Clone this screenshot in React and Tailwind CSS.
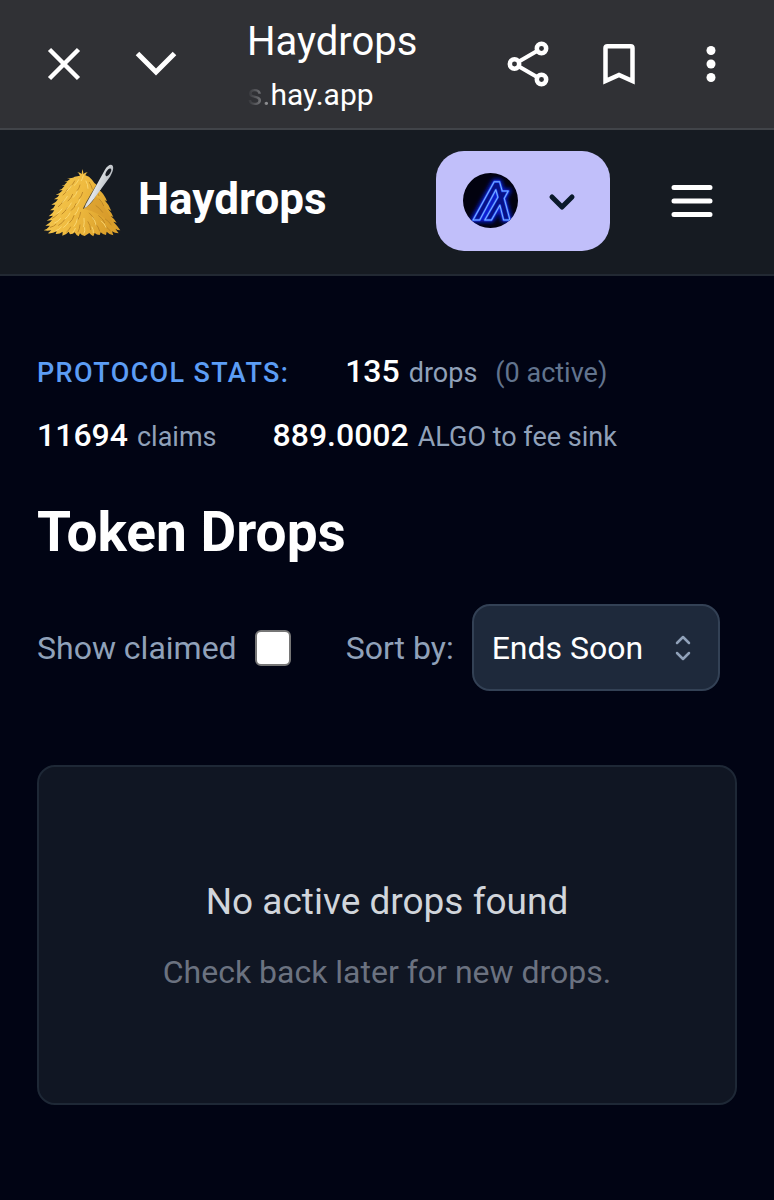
import { useState } from "react";

function HaystackLogo() {
  return (
    <svg
      className="w-[78px] h-[74px] shrink-0"
      viewBox="39 41 234 222"
      aria-hidden="true"
    >
      <defs>
        <linearGradient id="hay" x1="0" y1="0" x2="1" y2="0.3">
          <stop offset="0" stopColor="#f5c951" />
          <stop offset="0.55" stopColor="#efbb40" />
          <stop offset="1" stopColor="#dba02b" />
        </linearGradient>
        <linearGradient id="needle" x1="0" y1="0" x2="1" y2="0.5">
          <stop offset="0" stopColor="#9ba1a7" />
          <stop offset="0.5" stopColor="#e3e6e9" />
          <stop offset="1" stopColor="#a5abb1" />
        </linearGradient>
      </defs>
      <path
        fill="url(#hay)"
        d="M150 76 Q147 69 142 66 Q151 67 155 71 L157 56 Q160 64 160 71 Q165 66 173 66 Q167 70 166 75
        Q178 78 186 88 L193 98 Q206 106 213 118 L206 118 Q222 128 231 153 L224 150
        Q238 164 244 182 L234 176 Q246 188 250 200 L242 197 Q256 208 260 217 L250 214
        Q264 228 271 240 Q262 240 256 235 L266 249 Q254 249 246 243 L250 255 Q238 253 230 244
        L228 254 Q218 252 212 246 L209 254 Q200 254 194 248 L190 258 Q182 254 178 248
        L164 257 Q154 256 150 249 L146 258 Q138 254 134 246 Q130 252 120 252 L116 244
        Q108 254 97 256 L98 244 Q88 252 77 251 L80 243 Q68 250 54 249 L64 240 Q52 242 41 240
        Q52 236 60 226 L46 226 Q60 218 66 210 L50 211 Q64 204 69 196 L56 198 Q68 190 73 180
        L60 180 Q72 174 76 163 L64 163 Q78 158 84 147 L72 147 Q84 142 88 133 L77 134
        Q90 130 98 120 L86 120 Q98 116 104 106 L94 107 Q106 104 112 94 L102 95
        Q114 93 120 86 L111 84 Q128 84 134 79 Z"
      />
      <path
        fill="#d3962a"
        d="M164 176 L196 138 Q214 150 224 172 Q240 196 252 226 Q228 204 206 192 Q184 180 164 176 Z"
        opacity="0.5"
      />
      {/* Straw shadows */}
      <g stroke="#b98325" strokeWidth="3" strokeLinecap="round" fill="none" opacity="0.85">
        <path d="M134 92 q-4 10 -14 17 M150 104 q-2 10 -9 18 M112 118 q-4 10 -13 16" />
        <path d="M128 132 q-4 12 -14 20 M158 126 q-3 12 -11 20 M100 152 q-5 10 -15 17" />
        <path d="M138 160 q-4 12 -14 20 M112 172 q-5 11 -16 19 M84 190 q-6 9 -17 14" />
        <path d="M132 196 q-3 12 -13 21 M104 208 q-6 10 -18 17 M152 186 q-2 14 -9 23" />
        <path d="M78 222 q-7 7 -17 9 M122 230 q-4 9 -12 15 M150 224 q-1 12 -6 21" />
        <path d="M178 96 q6 8 9 20 M196 120 q7 7 11 16 M208 146 q9 9 13 20" />
        <path d="M198 166 q12 8 20 20 M178 188 q11 9 15 22 M206 196 q12 8 18 21" />
        <path d="M174 214 q7 10 8 24 M196 220 q10 9 13 22 M226 206 q12 8 18 18 M226 228 q9 5 15 14" />
      </g>
      {/* Straw highlights */}
      <g stroke="#fcdc79" strokeWidth="3" strokeLinecap="round" fill="none" opacity="0.85">
        <path d="M146 88 q-4 10 -13 17 M124 106 q-4 10 -14 17 M142 122 q-3 11 -12 19" />
        <path d="M112 138 q-5 11 -15 18 M150 146 q-3 12 -12 20 M124 158 q-5 11 -15 19" />
        <path d="M96 176 q-6 9 -16 15 M146 172 q-3 12 -11 21 M120 188 q-5 11 -15 18" />
        <path d="M92 204 q-6 9 -18 14 M142 206 q-2 13 -10 22 M116 214 q-5 10 -15 17" />
        <path d="M94 230 q-6 8 -16 11 M136 234 q-2 7 -8 12 M162 204 q2 14 -1 25" />
        <path d="M168 92 q6 10 6 22 M188 202 q8 9 10 22 M214 212 q10 8 14 19" />
        <path d="M164 232 q2 9 -2 17 M186 230 q5 8 4 17 M160 76 q-2 9 -6 15" />
      </g>
      <path
        fill="#171b22"
        d="M158 176 Q168 156 182 132 L206 92 L228 88 L188 152 Q174 170 158 176 Z"
        opacity="0.75"
      />
      <path
        fill="url(#needle)"
        d="M163 174 C168 158 178 144 186 129 L224 60 C232 45 243 40 248 46 C252 53 248 66 240 79
        L192 145 C182 158 173 168 163 174 Z"
      />
      <ellipse
        cx="235"
        cy="66"
        rx="6"
        ry="13"
        transform="rotate(31 235 66)"
        fill="#171b22"
      />
    </svg>
  );
}

function NetworkLogo() {
  const glyph =
    "M57 166 L120 52 H136 L144 80 H162 L150 102 L167 166 H148 L137 122 L112 166 H92 L131 98 L125 76 L77 166 Z";
  return (
    <svg
      className="size-[55px] shrink-0"
      viewBox="27 26 164 164"
      aria-hidden="true"
    >
      <defs>
        <clipPath id="disc">
          <circle cx="109" cy="108" r="82" />
        </clipPath>
        <filter id="glow" x="-30%" y="-30%" width="160%" height="160%">
          <feGaussianBlur stdDeviation="7" />
        </filter>
      </defs>
      <g clipPath="url(#disc)">
        <rect x="27" y="26" width="164" height="164" fill="#02020f" />
        <path
          d={glyph}
          fill="#0712a8"
          stroke="#0a1fd0"
          strokeWidth="14"
          filter="url(#glow)"
        />
        <path
          d={glyph}
          fill="#040a5c"
          fillOpacity="0.6"
          stroke="#1c46f0"
          strokeWidth="7"
          strokeLinejoin="round"
        />
        <path
          d={glyph}
          fill="none"
          stroke="#7fb2ff"
          strokeWidth="3"
          strokeLinejoin="round"
        />
      </g>
    </svg>
  );
}

function BrowserBar() {
  return (
    <div className="flex items-center h-[130px] bg-[#303135] border-b-2 border-[#414449] text-white">
      <button type="button" aria-label="Close" className="ml-[46px]">
        <svg className="size-9" viewBox="0 0 36 36" fill="none" stroke="currentColor" strokeWidth="4.500">
          <path d="M3.500 3.500 L32.500 32.500 M32.500 3.500 L3.500 32.500" />
        </svg>
      </button>
      <button type="button" aria-label="Minimize" className="ml-[52px]">
        <svg className="w-11 h-9" viewBox="0 0 44 36" fill="none" stroke="currentColor" strokeWidth="5">
          <path d="M3.500 7.500 L22 26 L40.500 7.500" />
        </svg>
      </button>
      <div className="flex-1 min-w-0 ml-[69px] pt-2">
        <div className="text-[40px] leading-[54px]">Haydrops</div>
        <div className="text-[30px] leading-[52px]">
          <span className="bg-linear-to-r from-[#303135] to-[#a0a1a4] bg-clip-text text-transparent">
            s.
          </span>
          hay.app
        </div>
      </div>
      <button type="button" aria-label="Share">
        <svg className="w-[42px] h-[46px]" viewBox="0 0 42 46" fill="none" stroke="currentColor" strokeWidth="4.500">
          <circle cx="7.500" cy="23" r="4.700" />
          <circle cx="34.500" cy="7.500" r="4.700" />
          <circle cx="34.500" cy="38.500" r="4.700" />
          <path strokeWidth="4" d="M11.500 20.700 L30.500 9.800 M11.500 25.300 L30.500 36.200" />
        </svg>
      </button>
      <button type="button" aria-label="Bookmark" className="ml-[53px]">
        <svg className="w-[34px] h-[42px]" viewBox="0 0 34 42" fill="none" stroke="currentColor" strokeWidth="4.500">
          <path d="M3.500 38 V5 Q3.500 3.200 5.300 3.200 H28.700 Q30.500 3.200 30.500 5 V38 L17 32 Z" />
        </svg>
      </button>
      <button type="button" aria-label="More" className="ml-[70px] mr-[58px]">
        <svg className="w-[10px] h-9" viewBox="0 0 10 36" fill="currentColor">
          <circle cx="5" cy="4.500" r="4.500" />
          <circle cx="5" cy="18" r="4.500" />
          <circle cx="5" cy="31.500" r="4.500" />
        </svg>
      </button>
    </div>
  );
}

function Header() {
  return (
    <header className="flex items-center h-[146px] pb-[3px] pl-[43px] pr-[60px] bg-[#161b22] border-b-2 border-[#222933]">
      <a href="#" className="flex items-center gap-[17px] text-white">
        <HaystackLogo />
        <span className="text-[44px] leading-[56px] font-bold pb-1">
          Haydrops
        </span>
      </a>
      <button
        type="button"
        aria-label="Select network"
        className="ml-auto flex items-center w-[174px] h-[100px] pl-[27px] rounded-[28px] bg-[#c1bffa] text-[#0b1a2b]"
      >
        <NetworkLogo />
        <svg
          className="w-7 h-5 ml-[30px]"
          viewBox="0 0 28 20"
          fill="none"
          stroke="currentColor"
          strokeWidth="5"
          strokeLinecap="round"
          strokeLinejoin="round"
        >
          <path d="M4 6 L14 16 L24 6" />
        </svg>
      </button>
      <button type="button" aria-label="Open menu" className="ml-[60px] text-white">
        <svg className="w-11 h-9" viewBox="0 0 44 36" stroke="currentColor" strokeWidth="5" strokeLinecap="round">
          <path d="M4 4.500 H40 M4 18 H40 M4 31.500 H40" />
        </svg>
      </button>
    </header>
  );
}

function Stat({ value, label, note }) {
  return (
    <div className="flex items-baseline gap-[9px]">
      <span className="text-[32px] font-medium text-white">{value}</span>
      <span className="text-[27px] text-slate-400">{label}</span>
      {note && <span className="text-[27px] text-slate-500 ml-[9px]">{note}</span>}
    </div>
  );
}

function App() {
  const [showClaimed, setShowClaimed] = useState(false);
  const [sortBy, setSortBy] = useState("ends-soon");

  return (
    <div className="min-h-screen bg-[#010414] font-['Roboto',sans-serif]">
      <BrowserBar />
      <Header />

      <main className="px-[37px] pt-[71px] pb-[92px]">
        {/* Protocol stats */}
        <div className="flex flex-wrap items-baseline gap-x-14 gap-y-[14px] leading-[48px]">
          <span className="text-[27px] font-medium uppercase tracking-wider text-[#5c9df5]">
            Protocol Stats:
          </span>
          <Stat value="135" label="drops" note="(0 active)" />
          <Stat value="11694" label="claims" />
          <Stat value="889.0002" label="ALGO to fee sink" />
        </div>

        <h1 className="mt-[35px] text-[55px] leading-[72px] font-bold text-white">
          Token Drops
        </h1>

        {/* Filters */}
        <div className="mt-9 flex flex-wrap items-center gap-x-[55px] text-[32px] text-slate-400">
          <label className="flex items-center gap-[18px]">
            Show claimed
            <input
              type="checkbox"
              checked={showClaimed}
              onChange={(e) => setShowClaimed(e.target.checked)}
              className="appearance-none size-9 rounded-[6px] border-2 border-[#767676] bg-white checked:bg-blue-500"
            />
          </label>
          <div className="flex items-center gap-[18px]">
            <label htmlFor="sort">Sort by:</label>
            <div className="relative">
              <select
                id="sort"
                value={sortBy}
                onChange={(e) => setSortBy(e.target.value)}
                className="appearance-none w-[248px] h-[87px] pl-[18px] rounded-[18px] border-2 border-[#334155] bg-[#1e293b] text-white"
              >
                <option value="ends-soon">Ends Soon</option>
                <option value="newest">Newest</option>
              </select>
              <svg
                className="absolute right-[29px] top-1/2 -translate-y-1/2 w-4 h-7 pointer-events-none"
                viewBox="0 0 16 28"
                fill="none"
                stroke="currentColor"
                strokeWidth="2.500"
                strokeLinecap="round"
                strokeLinejoin="round"
              >
                <path d="M2 9 L8 3 L14 9 M2 19 L8 25 L14 19" />
              </svg>
            </div>
          </div>
        </div>

        {/* Empty state */}
        <div className="mt-[74px] py-[107px] rounded-[18px] border-2 border-[#1e2836] bg-[#101623] text-center">
          <p className="text-[37px] leading-[56px] text-[#d1d5db]">
            No active drops found
          </p>
          <p className="mt-[18px] text-[32px] leading-[48px] text-[#6b7280]">
            Check back later for new drops.
          </p>
        </div>
      </main>
    </div>
  );
}

export default App;
